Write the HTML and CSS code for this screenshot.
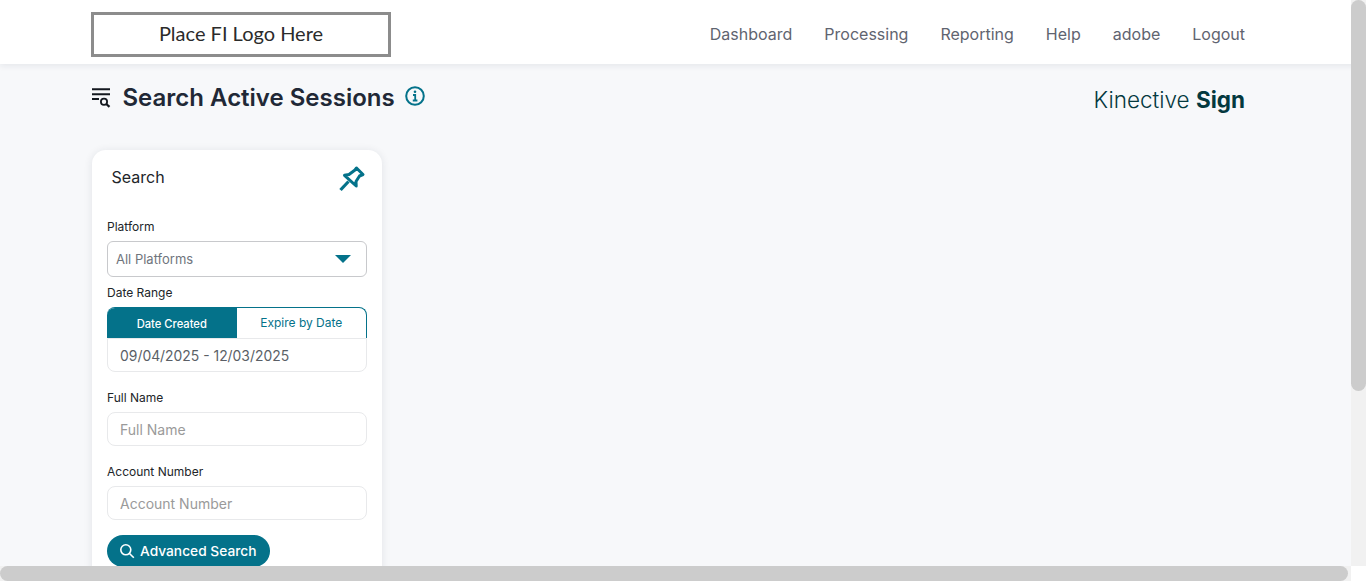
FILE: index.html
```html
<!DOCTYPE html>
<html lang="en">
<head>
    <meta charset="UTF-8">
    <meta name="viewport" content="width=device-width, initial-scale=1.0">
    <title>Search Active Sessions</title>
    <link rel="stylesheet" href="styles.css">
</head>
<body>
    <header class="topbar">
        <div class="logo-box">Place FI Logo Here</div>
        <nav class="nav-links">
            <a href="#">Dashboard</a>
            <a href="#">Processing</a>
            <a href="#">Reporting</a>
            <a href="#">Help</a>
            <a href="#">adobe</a>
            <a href="#">Logout</a>
        </nav>
    </header>

    <main class="page">
        <div class="title-row">
            <div class="title-left">
                <svg class="title-icon" width="20" height="22" viewBox="0 0 20 22" fill="none" stroke="#14181f" stroke-width="2">
                    <path d="M1 3.300h18M1 8.300h18M1 13h7"/>
                    <circle cx="13" cy="15.700" r="3.100" stroke-width="1.800"/>
                    <path d="M15.300 18l3.200 2.800" stroke-width="2.200"/>
                </svg>
                <h1>Search Active Sessions</h1>
                <svg class="info-icon" width="20" height="20" viewBox="0 0 20 20" fill="none" stroke="#04728a" stroke-width="2">
                    <circle cx="10" cy="10" r="8.800"/>
                    <path d="M8 9h2.200v5.500M7.800 14.500h4.600" stroke-width="1.800"/>
                    <circle cx="10" cy="5.800" r="1.300" fill="#04728a" stroke="none"/>
                </svg>
            </div>
            <div class="brand">Kinective <b>Sign</b></div>
        </div>

        <section class="search-card">
            <div class="card-head">
                <span>Search</span>
                <svg width="28" height="28" viewBox="0 0 28 28" fill="none" stroke="#04728a" stroke-width="3" stroke-linejoin="round">
                    <path d="M18.500 4l6.500 6.500-3.500 1.500-3.500 5.500.2 4.500-11.700-10.700 4.500-.8 6-4.500z"/>
                    <path d="M10.500 17.500l-8 8.500" stroke-width="3.200"/>
                </svg>
            </div>

            <label class="field-label">Platform</label>
            <div class="select-box">
                <span>All Platforms</span>
                <i class="caret"></i>
            </div>

            <label class="field-label date-label">Date Range</label>
            <div class="date-tabs">
                <div class="tab active">Date Created</div>
                <div class="tab">Expire by Date</div>
            </div>
            <div class="date-input">09/04/2025 - 12/03/2025</div>

            <label class="field-label name-label">Full Name</label>
            <input class="text-input" type="text" placeholder="Full Name">

            <label class="field-label account-label">Account Number</label>
            <input class="text-input" type="text" placeholder="Account Number">

            <button class="adv-btn">
                <svg width="16" height="16" viewBox="0 0 16 16" fill="none" stroke="#ffffff" stroke-width="1.600">
                    <circle cx="6.800" cy="6.800" r="5"/>
                    <path d="M10.500 10.500l4.300 4.300"/>
                </svg>
                Advanced Search
            </button>
        </section>
    </main>

    <!-- the window's scrollbars -->
    <div class="scroll-y"><div class="thumb-y"></div></div>
    <div class="scroll-x"><div class="thumb-x"></div></div>
    <div class="scroll-corner"></div>
</body>
</html>
```

FILE: styles.css
```css
html, body {
    height: 100%;
    overflow: hidden;
}

body {
    margin: 0;
    font-family: Inter, "Liberation Sans", sans-serif;
    background-color: #f7f8fa;
    color: #212529;
}

.topbar {
    display: flex;
    justify-content: space-between;
    align-items: center;
    height: 64px;
    padding: 0 121px 0 91px;
    background-color: #ffffff;
    box-shadow: 0 2px 6px rgba(30, 40, 60, 0.08);
}

.logo-box {
    width: 300px;
    height: 45px;
    box-sizing: border-box;
    margin-top: 5px;
    border: 3px solid #8c8c8c;
    font-family: Lato, sans-serif;
    font-size: 20px;
    line-height: 37px;
    text-align: center;
    color: #2b2b2b;
}

.nav-links {
    display: flex;
    gap: 32px;
    margin-top: 3px;
}

.nav-links a {
    font-size: 16px;
    color: #5f6470;
    text-decoration: none;
}

.page {
    padding: 0 121px 0 91px;
}

.title-row {
    display: flex;
    justify-content: space-between;
    height: 86px;
}

.title-left {
    display: flex;
    align-items: flex-start;
    padding-top: 19px;
}

.title-icon {
    margin-top: 3px;
}

h1 {
    margin: 0 10.500px 0 11.500px;
    font-size: 24px;
    font-weight: 600;
    line-height: 30px;
    color: #212836;
}

.info-icon {
    margin-top: 3px;
}

.brand {
    padding-top: 21px;
    font-size: 22.500px;
    font-weight: 300;
    line-height: 30px;
    color: #04393f;
}

.brand b {
    font-weight: 700;
}

.search-card {
    display: flex;
    flex-direction: column;
    align-items: flex-start;
    width: 290px;
    height: 669px;
    box-sizing: border-box;
    margin-left: 1px;
    padding: 0 15px;
    background-color: #ffffff;
    border-radius: 14px;
    box-shadow: 0 1px 8px rgba(30, 40, 60, 0.1);
}

.card-head {
    display: flex;
    justify-content: space-between;
    align-items: center;
    width: 260px;
    height: 58px;
    box-sizing: border-box;
    padding: 0 1px 0 4.500px;
    font-size: 16px;
    font-weight: 400;
}

.card-head span {
    margin-top: -5px;
}

.card-head svg {
    margin-top: -2px;
}

.field-label {
    margin-top: 10px;
    font-size: 12px;
    line-height: 18px;
    color: #212529;
}

.select-box {
    display: flex;
    justify-content: space-between;
    align-items: center;
    width: 260px;
    height: 36px;
    box-sizing: border-box;
    margin-top: 5px;
    padding: 0 15px 0 8px;
    border: 1px solid #c8c9cc;
    border-radius: 6px;
    font-size: 13px;
    color: #70757d;
}

.caret {
    width: 0;
    height: 0;
    border-left: 8px solid transparent;
    border-right: 8px solid transparent;
    border-top: 8px solid #04728a;
}

.date-label {
    margin-top: 7px;
}

.date-tabs {
    display: flex;
    width: 260px;
    height: 31px;
    box-sizing: border-box;
    margin-top: 5px;
    border: 1px solid #04728a;
    border-bottom: none;
    border-left: none;
    border-radius: 8px 8px 0 0;
    overflow: hidden;
}

.tab {
    width: 130px;
    font-size: 12px;
    line-height: 30px;
    text-align: center;
    color: #04728a;
}

.tab.active {
    height: 31px;
    margin-top: -1px;
    font-size: 11.200px;
    line-height: 34px;
    font-weight: 500;
    color: #ffffff;
    background-color: #04728a;
}

.date-input {
    width: 260px;
    height: 34px;
    box-sizing: border-box;
    padding-left: 12px;
    border: 1px solid #e8e9eb;
    border-radius: 0 0 8px 8px;
    font-size: 13.900px;
    line-height: 34px;
    color: #5a5f66;
}

.name-label {
    margin-top: 17px;
}

.account-label {
    margin-top: 17px;
}

.text-input {
    width: 260px;
    height: 34px;
    box-sizing: border-box;
    margin-top: 5px;
    padding: 0 12px;
    border: 1px solid #e8e9eb;
    border-radius: 8px;
    font-family: Inter, sans-serif;
    font-size: 14px;
    background-color: #ffffff;
}

.text-input::placeholder {
    color: #9a9a9a;
}

.adv-btn {
    display: flex;
    align-items: center;
    gap: 5px;
    height: 32px;
    margin-top: 15px;
    padding: 0 14px 0 12px;
    border: none;
    border-radius: 16px;
    background-color: #04728a;
    color: #ffffff;
    font-family: Inter, sans-serif;
    font-size: 13.750px;
    font-weight: 500;
}

.scroll-y {
    position: fixed;
    top: 0;
    right: 0;
    width: 15px;
    height: 566px;
    background-color: #f1f1f1;
}

.thumb-y {
    height: 391px;
    border-radius: 8px;
    background-color: #cccccc;
}

.scroll-x {
    position: fixed;
    left: 0;
    bottom: 0;
    width: 1351px;
    height: 15px;
    background-color: #f1f1f1;
}

.thumb-x {
    width: 1348px;
    height: 15px;
    border-radius: 8px;
    background-color: #cccccc;
}

.scroll-corner {
    position: fixed;
    right: 0;
    bottom: 0;
    width: 15px;
    height: 15px;
    background-color: #ffffff;
}
```
